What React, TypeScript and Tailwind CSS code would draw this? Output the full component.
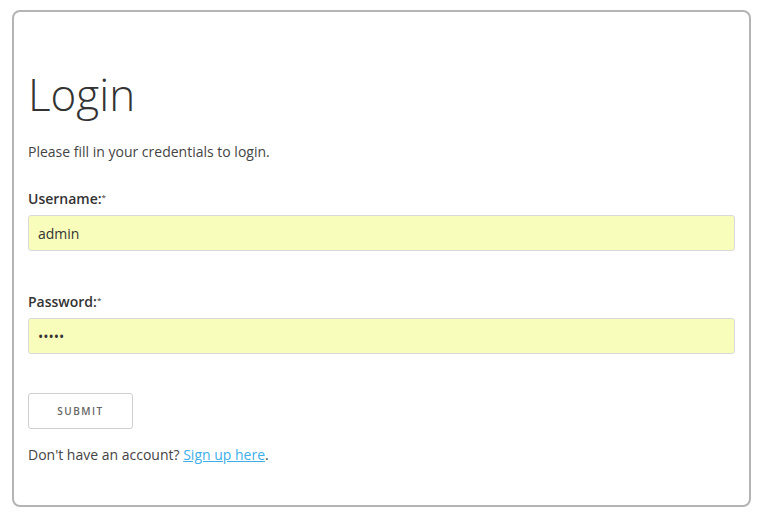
export default function App() {
  return (
    <div className="min-h-[522px] bg-white pl-[12px] pt-[10px] font-['Open_Sans',sans-serif] text-[#444]">
      <div className="flex h-[497px] w-[739px] flex-col rounded-[8px] border-2 border-[#b4b4b4] px-[14px]">
        <h1 className="mt-[56px] text-[44px] font-light leading-[52px] text-[#333]">Login</h1>
        <p className="mt-[22px] text-[14px] leading-[20px]">Please fill in your credentials to login.</p>

        <form className="mt-[27px] flex flex-col">
          <label className="text-[14px] font-semibold leading-[20px] text-[#333]">
            Username:<sup className="relative -top-[4px] text-[8px] font-normal">*</sup>
          </label>
          <input
            defaultValue="admin"
            className="mt-[6px] h-[36px] w-full rounded-[3px] border border-[#d9d9d9] bg-[#f9fdbc] px-[9px] text-[14px] text-[#333] outline-none"
          />

          <label className="mt-[41px] text-[14px] font-semibold leading-[20px] text-[#333]">
            Password:<sup className="relative -top-[4px] text-[8px] font-normal">*</sup>
          </label>
          <input
            type="password"
            defaultValue="admin"
            className="mt-[6px] h-[36px] w-full rounded-[3px] border border-[#d9d9d9] bg-[#f9fdbc] px-[9px] text-[14px] text-[#333] outline-none"
          />

          <button
            type="button"
            className="mt-[39px] h-[36px] w-[105px] rounded-[3px] border border-[#cfcfcf] bg-white text-[10px] font-semibold tracking-[1.5px] text-[#666]"
          >
            SUBMIT
          </button>
        </form>

        <p className="mt-[16px] text-[14px] leading-[20px]">
          Don't have an account?{' '}
          <a href="#" className="text-[#3daee9] underline">
            Sign up here
          </a>
          .
        </p>
      </div>
    </div>
  );
}
